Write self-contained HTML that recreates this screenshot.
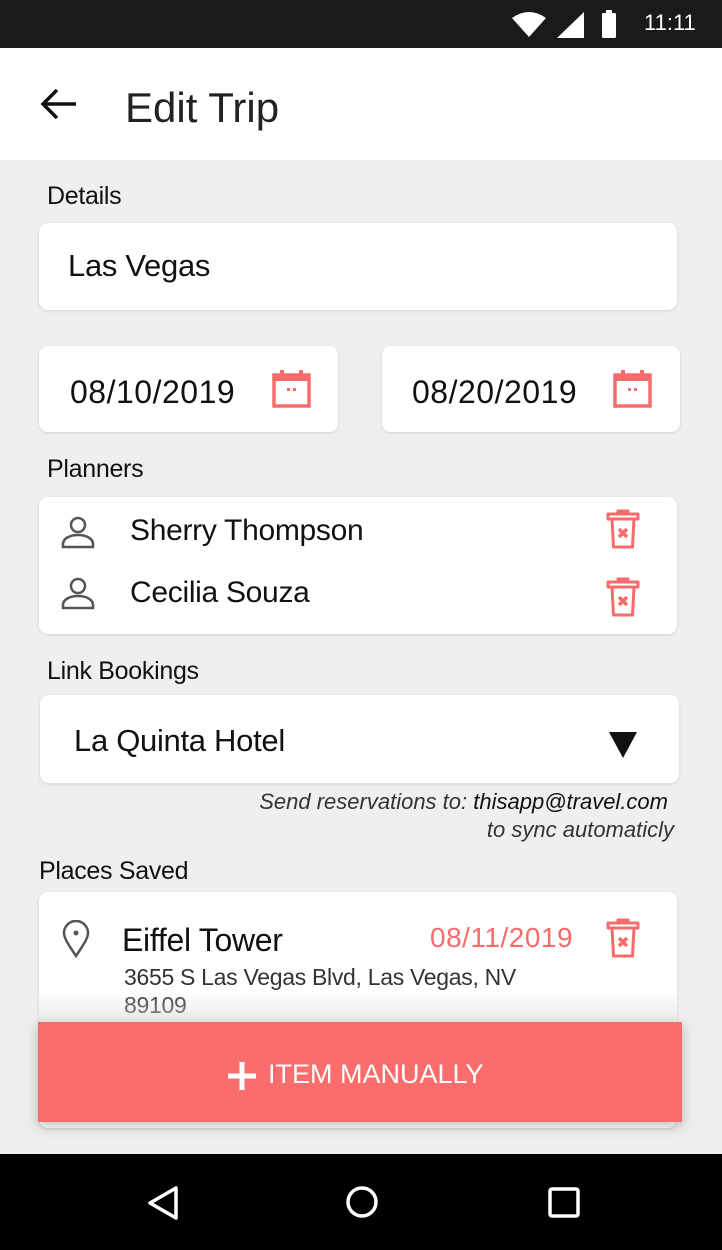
<!DOCTYPE html>
<html><head><meta charset="utf-8"><style>
*{margin:0;padding:0;box-sizing:border-box}
body{width:722px;height:1250px;position:relative;overflow:hidden;background:#efefef;font-family:"Liberation Sans",sans-serif;color:#111}
.a{position:absolute}
.card{position:absolute;background:#fff;border-radius:9px;box-shadow:0 1px 3px rgba(0,0,0,.12)}
.t{position:absolute;white-space:nowrap;letter-spacing:-0.3px}
.red{color:#f86b6b}
</style></head><body>
<div class="a" style="left:0;top:0;width:722px;height:48px;background:#1a1a1a"></div>
<svg class="a" style="left:510px;top:8px" width="212" height="32" viewBox="0 0 212 32">
<path d="M2 10 Q19 -2 36 10 L19 29 Z" fill="#fff"/>
<path d="M74 4 L74 30 L47 30 Z" fill="#fff"/>
<rect x="92" y="5" width="14" height="25" rx="1.5" fill="#fff"/><rect x="96" y="2" width="6" height="4" fill="#fff"/>
<text x="134" y="22" fill="#fff" font-size="22" font-family="Liberation Sans">11:11</text>
</svg>
<div class="a" style="left:0;top:48px;width:722px;height:112px;background:#fff"></div>
<svg class="a" style="left:38px;top:88px" width="40" height="32" viewBox="0 0 40 32"><path d="M38 16H5M19 2L5 16l14 14" stroke="#111" stroke-width="3.5" fill="none"/></svg>
<div class="t" style="left:125px;top:84px;font-size:42px;color:#222;letter-spacing:0">Edit Trip</div>

<div class="t" style="left:47px;top:182px;font-size:25px">Details</div>
<div class="card" style="left:39px;top:223px;width:638px;height:87px"></div>
<div class="t" style="left:68px;top:248px;font-size:31px">Las Vegas</div>

<div class="card" style="left:39px;top:346px;width:299px;height:86px"></div>
<div class="t" style="left:70px;top:374px;font-size:32px;letter-spacing:0.5px">08/10/2019</div>
<div class="card" style="left:382px;top:346px;width:298px;height:86px"></div>
<div class="t" style="left:412px;top:374px;font-size:32px;letter-spacing:0.5px">08/20/2019</div>
<svg class="a" style="left:271px;top:369px" width="42" height="40" viewBox="0 0 42 40"><rect x="3" y="6" width="35" height="31" fill="none" stroke="#f86b6b" stroke-width="3.5"/><rect x="3" y="6" width="35" height="6" fill="#f86b6b"/><rect x="9" y="1" width="4" height="7" fill="#f86b6b"/><rect x="28" y="1" width="4" height="7" fill="#f86b6b"/><rect x="16" y="19" width="3" height="3" fill="#f86b6b"/><rect x="22" y="19" width="3" height="3" fill="#f86b6b"/></svg>
<svg class="a" style="left:612px;top:369px" width="42" height="40" viewBox="0 0 42 40"><rect x="3" y="6" width="35" height="31" fill="none" stroke="#f86b6b" stroke-width="3.5"/><rect x="3" y="6" width="35" height="6" fill="#f86b6b"/><rect x="9" y="1" width="4" height="7" fill="#f86b6b"/><rect x="28" y="1" width="4" height="7" fill="#f86b6b"/><rect x="16" y="19" width="3" height="3" fill="#f86b6b"/><rect x="22" y="19" width="3" height="3" fill="#f86b6b"/></svg>

<div class="t" style="left:47px;top:455px;font-size:25px">Planners</div>
<div class="card" style="left:39px;top:497px;width:638px;height:137px"></div>
<svg class="a" style="left:60px;top:516px" width="36" height="34" viewBox="0 0 36 34"><circle cx="18" cy="9" r="7" fill="none" stroke="#555" stroke-width="2.5"/><path d="M3 31v-3c0-5 6-9 15-9s15 4 15 9v3z" fill="none" stroke="#555" stroke-width="2.5"/></svg>
<svg class="a" style="left:60px;top:577px" width="36" height="34" viewBox="0 0 36 34"><circle cx="18" cy="9" r="7" fill="none" stroke="#555" stroke-width="2.5"/><path d="M3 31v-3c0-5 6-9 15-9s15 4 15 9v3z" fill="none" stroke="#555" stroke-width="2.5"/></svg>
<div class="t" style="left:130px;top:514px;font-size:30px">Sherry Thompson</div>
<div class="t" style="left:130px;top:576px;font-size:30px">Cecilia Souza</div>
<svg class="a" style="left:604px;top:509px" width="40" height="42" viewBox="0 0 40 42"><path d="M4 5h30v5H4zM8 10l1.5 28h19L30 10M14 5V2h10v3" fill="none" stroke="#f86b6b" stroke-width="3" stroke-linejoin="round"/><path d="M15 20l8 8M23 20l-8 8" stroke="#f86b6b" stroke-width="3.5"/></svg>
<svg class="a" style="left:604px;top:577px" width="40" height="42" viewBox="0 0 40 42"><path d="M4 5h30v5H4zM8 10l1.5 28h19L30 10M14 5V2h10v3" fill="none" stroke="#f86b6b" stroke-width="3" stroke-linejoin="round"/><path d="M15 20l8 8M23 20l-8 8" stroke="#f86b6b" stroke-width="3.5"/></svg>

<div class="t" style="left:47px;top:657px;font-size:25px">Link Bookings</div>
<div class="card" style="left:40px;top:695px;width:639px;height:88px"></div>
<div class="t" style="left:74px;top:723px;font-size:31px">La Quinta Hotel</div>
<svg class="a" style="left:608px;top:731px" width="30" height="28" viewBox="0 0 30 28"><path d="M1 1h28L15 27z" fill="#111"/></svg>
<div class="t" style="right:54px;top:789px;font-size:22px;font-style:italic;color:#333;letter-spacing:0">Send reservations to: <span style="color:#111">thisapp@travel.com</span></div>
<div class="t" style="right:48px;top:817px;font-size:22px;font-style:italic;color:#333;letter-spacing:0">to sync automaticly</div>

<div class="t" style="left:39px;top:857px;font-size:25px">Places Saved</div>
<div class="card" style="left:39px;top:892px;width:638px;height:236px"></div>
<svg class="a" style="left:60px;top:920px" width="32" height="38" viewBox="0 0 32 38"><path d="M16 36C8 24 4 18 4 13a12 12 0 0 1 24 0c0 5-4 11-12 23z" fill="none" stroke="#555" stroke-width="2.5"/><circle cx="16" cy="13" r="2.5" fill="#555"/></svg>
<div class="t" style="left:122px;top:922px;font-size:32px">Eiffel Tower</div>
<div class="t red" style="left:430px;top:922px;font-size:28px;letter-spacing:0.5px">08/11/2019</div>
<svg class="a" style="left:604px;top:918px" width="40" height="42" viewBox="0 0 40 42"><path d="M4 5h30v5H4zM8 10l1.5 28h19L30 10M14 5V2h10v3" fill="none" stroke="#f86b6b" stroke-width="3" stroke-linejoin="round"/><path d="M15 20l8 8M23 20l-8 8" stroke="#f86b6b" stroke-width="3.5"/></svg>
<div class="t" style="left:124px;top:964px;font-size:23px;color:#333">3655 S Las Vegas Blvd, Las Vegas, NV</div>
<div class="t" style="left:124px;top:992px;font-size:23px;color:#333">89109</div>
<div class="a" style="left:39px;top:990px;width:638px;height:32px;background:linear-gradient(rgba(235,235,235,0),rgba(220,220,220,.6))"></div>
<div class="a" style="left:38px;top:1022px;width:644px;height:100px;background:#fb6d6d;box-shadow:0 4px 12px rgba(0,0,0,.25)"></div>
<svg class="a" style="left:227px;top:1061px" width="30" height="30" viewBox="0 0 30 30"><path d="M15 1v28M1 15h28" stroke="#fff" stroke-width="5"/></svg>
<div class="t" style="left:268px;top:1059px;font-size:27px;color:#fff;letter-spacing:0">ITEM MANUALLY</div>

<div class="a" style="left:0;top:1154px;width:722px;height:96px;background:#000"></div>
<svg class="a" style="left:0;top:1154px" width="722" height="96" viewBox="0 0 722 96"><path d="M176 34v30l-26-15z" fill="none" stroke="#fff" stroke-width="3.5" stroke-linejoin="round"/><circle cx="362" cy="48" r="14" fill="none" stroke="#fff" stroke-width="3.5"/><rect x="550" y="35" width="28" height="27" rx="2" fill="none" stroke="#fff" stroke-width="3.5"/></svg>
</body></html>
